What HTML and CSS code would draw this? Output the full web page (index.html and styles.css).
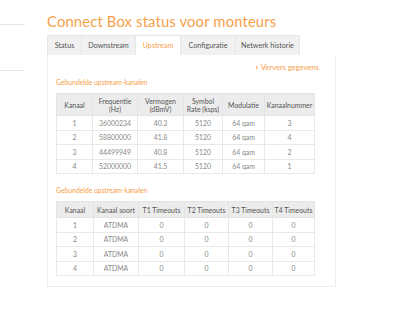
FILE: index.html
```html
<!DOCTYPE html>
<html>
<head>
<meta charset="utf-8">
<link rel="stylesheet" href="styles.css">
</head>
<body>
<div class="page">
  <aside class="side">
    <div class="line"></div>
    <div class="line"></div>
  </aside>
  <main class="main">
    <h1 class="title">Connect Box status voor monteurs</h1>
    <nav class="tabs">
      <span class="tab">Status</span>
      <span class="tab">Downstream</span>
      <span class="tab active">Upstream</span>
      <span class="tab">Configuratie</span>
      <span class="tab">Netwerk historie</span>
    </nav>
    <section class="panel">
      <div class="refresh"><span class="chev">&#x203A;</span> Ververs gegevens</div>
      <h2 class="heading">Gebundelde upstream-kanalen</h2>
      <table class="grid t1">
        <thead>
          <tr><th>Kanaal</th><th>Frequentie<br>(Hz)</th><th>Vermogen<br>(dBmV)</th><th>Symbol<br>Rate (ksps)</th><th>Modulatie</th><th>Kanaalnummer</th></tr>
        </thead>
        <tbody>
          <tr><td>1</td><td>36000234</td><td>40.3</td><td>5120</td><td>64 qam</td><td>3</td></tr>
          <tr><td>2</td><td>58800000</td><td>41.8</td><td>5120</td><td>64 qam</td><td>4</td></tr>
          <tr><td>3</td><td>44499949</td><td>40.8</td><td>5120</td><td>64 qam</td><td>2</td></tr>
          <tr><td>4</td><td>52000000</td><td>41.5</td><td>5120</td><td>64 qam</td><td>1</td></tr>
        </tbody>
      </table>
      <h2 class="heading h2b">Gebundelde upstream-kanalen</h2>
      <table class="grid t2">
        <thead>
          <tr><th>Kanaal</th><th>Kanaal soort</th><th>T1 Timeouts</th><th>T2 Timeouts</th><th>T3 Timeouts</th><th>T4 Timeouts</th></tr>
        </thead>
        <tbody>
          <tr><td>1</td><td>ATDMA</td><td>0</td><td>0</td><td>0</td><td>0</td></tr>
          <tr><td>2</td><td>ATDMA</td><td>0</td><td>0</td><td>0</td><td>0</td></tr>
          <tr><td>3</td><td>ATDMA</td><td>0</td><td>0</td><td>0</td><td>0</td></tr>
          <tr><td>4</td><td>ATDMA</td><td>0</td><td>0</td><td>0</td><td>0</td></tr>
        </tbody>
      </table>
    </section>
  </main>
</div>
</body>
</html>
```
FILE: styles.css
```css
* { box-sizing: border-box; }
html, body { margin: 0; padding: 0; background: #fff; }
body { font-family: Lato, "Open Sans", sans-serif; color: #666; width: 400px; height: 314px; overflow: hidden; }
.page { display: flex; }
.side { width: 25px; padding-top: 24px; display: flex; flex-direction: column; gap: 45px; }
.line { height: 1px; background: #e6e6e6; }
.main { margin-left: 22px; width: 289px; }
.title { margin: 0; padding-top: 11px; font-size: 14.8px; line-height: 20px; font-weight: 400; color: #f7a04a; letter-spacing: 0.15px; white-space: nowrap; }
.tabs { display: flex; margin-top: 4px; height: 20px; }
.tab { display: flex; align-items: center; justify-content: center; font-size: 7.2px; color: #555; background: #f1f1f1; border: 1px solid #e6e6e6; border-bottom: none; margin-right: -1px; }
.tab:nth-child(1) { width: 35px; }
.tab:nth-child(2) { width: 55px; }
.tab:nth-child(3) { width: 46px; }
.tab:nth-child(4) { width: 56px; }
.tab:nth-child(5) { width: 65px; }
.tab.active { background: #fff; color: #f7a04a; }
.panel { border: 1px solid #ededed; border-top: none; height: 232px; padding: 5px 0 0 8px; }
.refresh { text-align: right; padding-right: 16px; font-size: 7.6px; color: #f7a04a; line-height: 13px; }
.chev { font-weight: 700; font-size: 9px; margin-right: 1px; }
.heading { margin: 2px 0 0; font-size: 6.8px; font-weight: 400; color: #f7a04a; line-height: 12px; }
.h2b { margin-top: 10px; }
.grid { border-collapse: collapse; width: 259px; margin-top: 5px; font-size: 6.9px; }
.grid th { background: #ececec; color: #555; font-weight: 400; border: 1px solid #e4e4e4; line-height: 8px; padding: 0; }
.grid td { color: #888; text-align: center; border: 1px solid #e9e9e9; height: 14.5px; padding: 0; }
.t1 th { height: 22px; }
.t2 th { height: 16px; }
.t1 th:nth-child(1) { width: 36px; }
.t1 th:nth-child(2) { width: 45px; }
.t1 th:nth-child(3) { width: 46px; }
.t1 th:nth-child(4) { width: 39px; }
.t1 th:nth-child(5) { width: 42px; }
.t2 th:nth-child(1) { width: 37px; }
.t2 th:nth-child(2) { width: 45px; }
.t2 th:nth-child(3) { width: 46px; }
.t2 th:nth-child(4) { width: 44px; }
.t2 th:nth-child(5) { width: 44px; }
```
